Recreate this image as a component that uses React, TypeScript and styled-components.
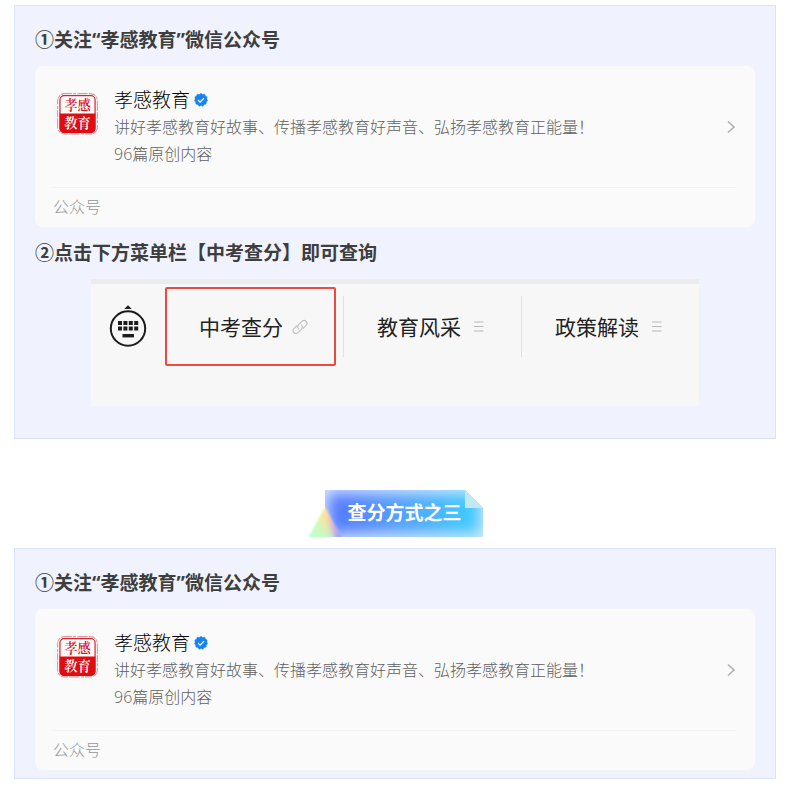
import React from "react";
import styled, { createGlobalStyle } from "styled-components";

const GlobalStyle = createGlobalStyle`
  * { box-sizing: border-box; }
  body {
    margin: 0;
    background: #ffffff;
    color: #3e3e3e;
    font-family: "Open Sans", "Noto Sans CJK SC", sans-serif;
  }
`;

const Page = styled.main`
  padding: 5px 19px 8px 14px;
`;

const Panel = styled.section<{ $bottom: number }>`
  padding: 20px 20px ${(p) => p.$bottom}px;
  background: #f0f3fd;
  border: 1px solid #d9e2fb;
`;

const StepTitle = styled.h2`
  margin: 0 0 12px;
  font-size: 19px;
  line-height: 28px;
  font-weight: 700;
  color: #3e3e3e;
`;

const AccountCard = styled.a`
  display: block;
  padding: 20px 18px 0;
  margin-bottom: 12px;
  border-radius: 8px;
  background: #fafafa;
  color: inherit;
  text-decoration: none;
  font-weight: 300;

  &:last-child {
    margin-bottom: 0;
  }
`;

const AccountBody = styled.div`
  display: flex;
  align-items: center;
  gap: 12px;
  padding-bottom: 19px;
  border-bottom: 1px solid #f2f2f2;
`;

const Avatar = styled.svg`
  flex: none;
  align-self: flex-start;
  width: 49px;
  height: 49px;
  margin-top: 3px;
`;

const AccountInfo = styled.div`
  flex: 1;
  min-width: 0;
`;

const AccountName = styled.div`
  display: flex;
  align-items: center;
  gap: 4px;
  font-size: 19px;
  line-height: 28px;
  color: #000000;
`;

const AccountText = styled.p`
  margin: 0;
  font-size: 16px;
  line-height: 27px;
  color: #606060;
`;

const AccountKind = styled.div`
  font-size: 16px;
  line-height: 39px;
  color: #969696;
`;

const MenuShot = styled.nav`
  display: grid;
  grid-template-columns: 74px repeat(3, 1fr);
  margin: 0 56px;
  padding: 3px 0 40px;
  border-top: 5px solid #ececec;
  background: #f7f7f7;
`;

const KeyboardButton = styled.button`
  display: flex;
  align-items: center;
  justify-content: center;
  padding: 0;
  border: 0;
  background: none;
`;

const MenuCell = styled.div`
  display: flex;
  height: 79px;
  align-items: center;
`;

const MenuButton = styled.button<{ $active?: boolean }>`
  display: flex;
  flex: 1;
  align-items: center;
  justify-content: center;
  gap: ${(p) => (p.$active ? 9 : 12)}px;
  height: ${(p) => (p.$active ? 79 : 61)}px;
  margin-right: ${(p) => (p.$active ? 7 : 0)}px;
  padding: ${(p) => (p.$active ? "0 0 0 6px" : "0 4px 0 0")};
  border: ${(p) => (p.$active ? "2px solid #ea4b40" : "0 solid #e2e2e2")};
  border-left-width: ${(p) => (p.$active ? 2 : 1)}px;
  border-radius: ${(p) => (p.$active ? 2 : 0)}px;
  background: none;
  color: #222222;
  font-family: inherit;
  font-size: 21px;
  line-height: 30px;
`;

const BannerRow = styled.div`
  display: flex;
  justify-content: center;
  padding: 51px 0 11px 2px;
`;

const Banner = styled.h1`
  position: relative;
  z-index: 0;
  margin: 0;
  padding: 0 22px 0 39px;
  font-size: 19px;
  line-height: 47px;
  font-weight: 700;
  color: #ffffff;
`;

const BannerArt = styled.svg`
  position: absolute;
  inset: 0;
  z-index: -1;
  width: 100%;
  height: 100%;
`;

const SealAvatar = () => (
  <Avatar viewBox="0 0 48 48" aria-hidden="true">
    <circle cx="24" cy="24" r="24" fill="#f7f7f7" />
    <rect x="4.5" y="4.500" width="39" height="39.500" rx="7" fill="#fff" stroke="#dc9a9e" strokeWidth="1.1" strokeDasharray="7 1 3 1.5 10 1" />
    <rect x="6.8" y="6.500" width="34.4" height="36" rx="4" fill="#fff" stroke="#d8232d" strokeWidth="1.2" />
    <path d="M6.5 24H41.5V38.5Q41.5 43 37 43H11Q6.5 43 6.5 38.5Z" fill="#df0c12" />
    <g fontFamily="Noto Serif CJK SC, Noto Sans CJK SC, serif" fontSize="13" fontWeight="600" textAnchor="middle">
      <text x="24" y="20.500" fill="#d8101c">孝感</text>
      <text x="24" y="38" fill="#fff">教育</text>
    </g>
  </Avatar>
);

const VerifiedBadge = () => (
  <svg width="14" height="14" viewBox="0 0 14 14" aria-label="已认证">
    <path
      d="M7 .3 8.7 1.5 10.7 1.2 11.4 3 13.2 4 12.7 6 13.7 7.6 12.3 9.1 12.1 11.1 10.1 11.6 8.9 13.3 7 12.6 5.1 13.3 3.9 11.6 1.9 11.1 1.7 9.1 .3 7.6 1.3 6 .8 4 2.6 3 3.3 1.2 5.3 1.5Z"
      fill="#1485ee"
      stroke="#1485ee"
      strokeWidth=".5"
      strokeLinejoin="round"
    />
    <path d="m4 7 2.1 2.1 4-4" fill="none" stroke="#fff" strokeWidth="1.3" />
  </svg>
);

const Chevron = () => (
  <svg width="10" height="14" viewBox="0 0 10 14" aria-hidden="true">
    <path d="m1 1.5 6 5.5-6 5.5" fill="none" stroke="#b0b0b0" strokeWidth="1.6" />
  </svg>
);

const KeyboardIcon = () => (
  <svg width="38" height="44" viewBox="0 0 38 44" aria-hidden="true">
    <path d="M15.3 4 19 .3 22.7 4Z" fill="#1c1c1c" />
    <circle cx="19" cy="23.5" r="17.2" fill="none" stroke="#1c1c1c" strokeWidth="2" />
    <g fill="#1c1c1c">
      {[9, 14.4, 19.8, 25.2].map((x) => (
        <React.Fragment key={x}>
          <rect x={x} y="16" width="4" height="4" />
          <rect x={x} y="21.5" width="4" height="4" />
        </React.Fragment>
      ))}
      <rect x="13.5" y="29" width="11.5" height="3.4" />
    </g>
  </svg>
);

const LinkIcon = () => (
  <svg width="16" height="16" viewBox="0 0 16 16" fill="none" stroke="#bdbdbd" strokeWidth="1.1" strokeLinecap="round" aria-hidden="true">
    <path d="M6.6 9.9Q4.7 7.7 6.6 5.7L10 2.3a2.9 2.9 0 0 1 4.100 4.100L11.300 9.200" />
    <path d="M9.4 6.1Q11.3 8.3 9.4 10.3L6 13.7a2.9 2.9 0 0 1-4.100-4.100L4.700 6.800" />
  </svg>
);

const ListIcon = () => (
  <svg width="11" height="11" viewBox="0 0 11 11" aria-hidden="true">
    <path d="M1 1h9.5M1 5.5h9.5M1 10h9.5" stroke="#b8b8b8" />
  </svg>
);

const Account = () => (
  <AccountCard href="#account">
    <AccountBody>
      <SealAvatar />
      <AccountInfo>
        <AccountName>
          孝感教育
          <VerifiedBadge />
        </AccountName>
        <AccountText>讲好孝感教育好故事、传播孝感教育好声音、弘扬孝感教育正能量！</AccountText>
        <AccountText>96篇原创内容</AccountText>
      </AccountInfo>
      <Chevron />
    </AccountBody>
    <AccountKind>公众号</AccountKind>
  </AccountCard>
);

const SectionBanner = () => (
  <BannerRow>
    <Banner>
      <BannerArt viewBox="0 0 174 47" preserveAspectRatio="none" aria-hidden="true">
        <defs>
          <linearGradient id="bannerFill">
            <stop offset=".1" stopColor="#557fff" />
            <stop offset=".45" stopColor="#559fff" />
            <stop offset=".9" stopColor="#42c8ff" />
          </linearGradient>
          <linearGradient id="prismFill" x1="0" x2="1">
            <stop offset="0" stopColor="#d4ffe4" />
            <stop offset=".3" stopColor="#d8f8b0" />
            <stop offset=".52" stopColor="#ffe09a" />
            <stop offset=".72" stopColor="#dcb8d4" />
            <stop offset="1" stopColor="#7ea0ff" />
          </linearGradient>
          <linearGradient id="prismBase" x1="0" x2="0" y1="0" y2="1">
            <stop offset=".4" stopColor="#b6ffd0" stopOpacity="0" />
            <stop offset="1" stopColor="#b6ffd0" stopOpacity=".8" />
          </linearGradient>
          <clipPath id="bannerShape">
            <path d="M17 0H156L174 18V47H17Z" />
          </clipPath>
          <filter id="edgeBlur" x="-20%" y="-50%" width="140%" height="200%">
            <feGaussianBlur stdDeviation="7" />
          </filter>
          <filter id="prismBlur" x="-10%" y="-10%" width="120%" height="120%">
            <feGaussianBlur stdDeviation=".8" />
          </filter>
        </defs>
        <g clipPath="url(#bannerShape)">
          <path d="M17 0H174V47H17Z" fill="url(#bannerFill)" />
          <path d="M13 -4H178V51H13Z" fill="none" stroke="#dfeaff" strokeWidth="14" filter="url(#edgeBlur)" />
        </g>
        <path d="M156 0V18H174Z" fill="#c2e7f6" />
        <g filter="url(#prismBlur)">
          <path d="M17 17 0 48H34Z" fill="url(#prismFill)" />
          <path d="M17 17 0 48H26Z" fill="url(#prismBase)" />
        </g>
      </BannerArt>
      查分方式之三
    </Banner>
  </BannerRow>
);

export default function App() {
  return (
    <>
      <GlobalStyle />
      <Page>
        <Panel $bottom={32}>
          <StepTitle>①关注“孝感教育”微信公众号</StepTitle>
          <Account />
          <StepTitle>②点击下方菜单栏【中考查分】即可查询</StepTitle>
          <MenuShot aria-label="公众号菜单">
            <KeyboardButton type="button" aria-label="键盘">
              <KeyboardIcon />
            </KeyboardButton>
            <MenuCell>
              <MenuButton type="button" $active>
                中考查分
                <LinkIcon />
              </MenuButton>
            </MenuCell>
            <MenuCell>
              <MenuButton type="button">
                教育风采
                <ListIcon />
              </MenuButton>
            </MenuCell>
            <MenuCell>
              <MenuButton type="button">
                政策解读
                <ListIcon />
              </MenuButton>
            </MenuCell>
          </MenuShot>
        </Panel>
        <SectionBanner />
        <Panel $bottom={8}>
          <StepTitle>①关注“孝感教育”微信公众号</StepTitle>
          <Account />
        </Panel>
      </Page>
    </>
  );
}
